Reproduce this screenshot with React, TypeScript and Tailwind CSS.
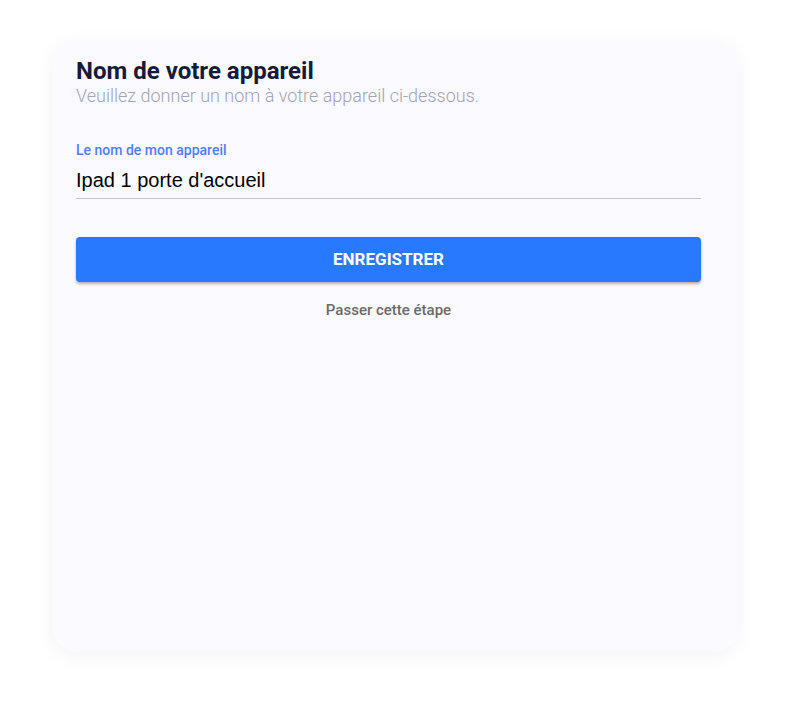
import React from "react";

export default function App() {
  return (
    <div className="w-[799px] h-[704px] bg-white pt-[40px] pl-[52px]" style={{ fontFamily: "Roboto, 'Noto Sans', sans-serif" }}>
      <div className="w-[686px] h-[612px] rounded-[24px] bg-[#fafaff] shadow-[0_4px_20px_rgba(0,0,0,0.05)] pl-[24px] pt-[17px]">
        <div className="w-[625px]">
          <h1 className="text-[24px] leading-[28px] font-bold text-[#141a3a]">Nom de votre appareil</h1>
          <p className="text-[18px] leading-[22px] font-light text-[#a3a3b8]">Veuillez donner un nom à votre appareil ci-dessous.</p>
          <div className="mt-[34px]">
            <label className="block text-[14px] leading-[18px] font-medium text-[#4f7dff]">Le nom de mon appareil</label>
            <div className="mt-[8px] border-b border-[#c4c4cc] pb-[5px] text-[20px] leading-[26px] text-black" style={{ fontFamily: "'Liberation Sans', Arial, sans-serif" }}>
              Ipad 1 porte d'accueil
            </div>
          </div>
          <button className="mt-[38px] w-full h-[45px] rounded-[4px] bg-[#2979ff] text-white text-[17px] font-bold uppercase shadow-[0_2px_3px_rgba(0,0,0,0.3)]">
            ENREGISTRER
          </button>
          <div className="mt-[18px] text-center text-[15px] leading-[20px] font-medium text-[#6b6b6b]">Passer cette étape</div>
        </div>
      </div>
    </div>
  );
}
